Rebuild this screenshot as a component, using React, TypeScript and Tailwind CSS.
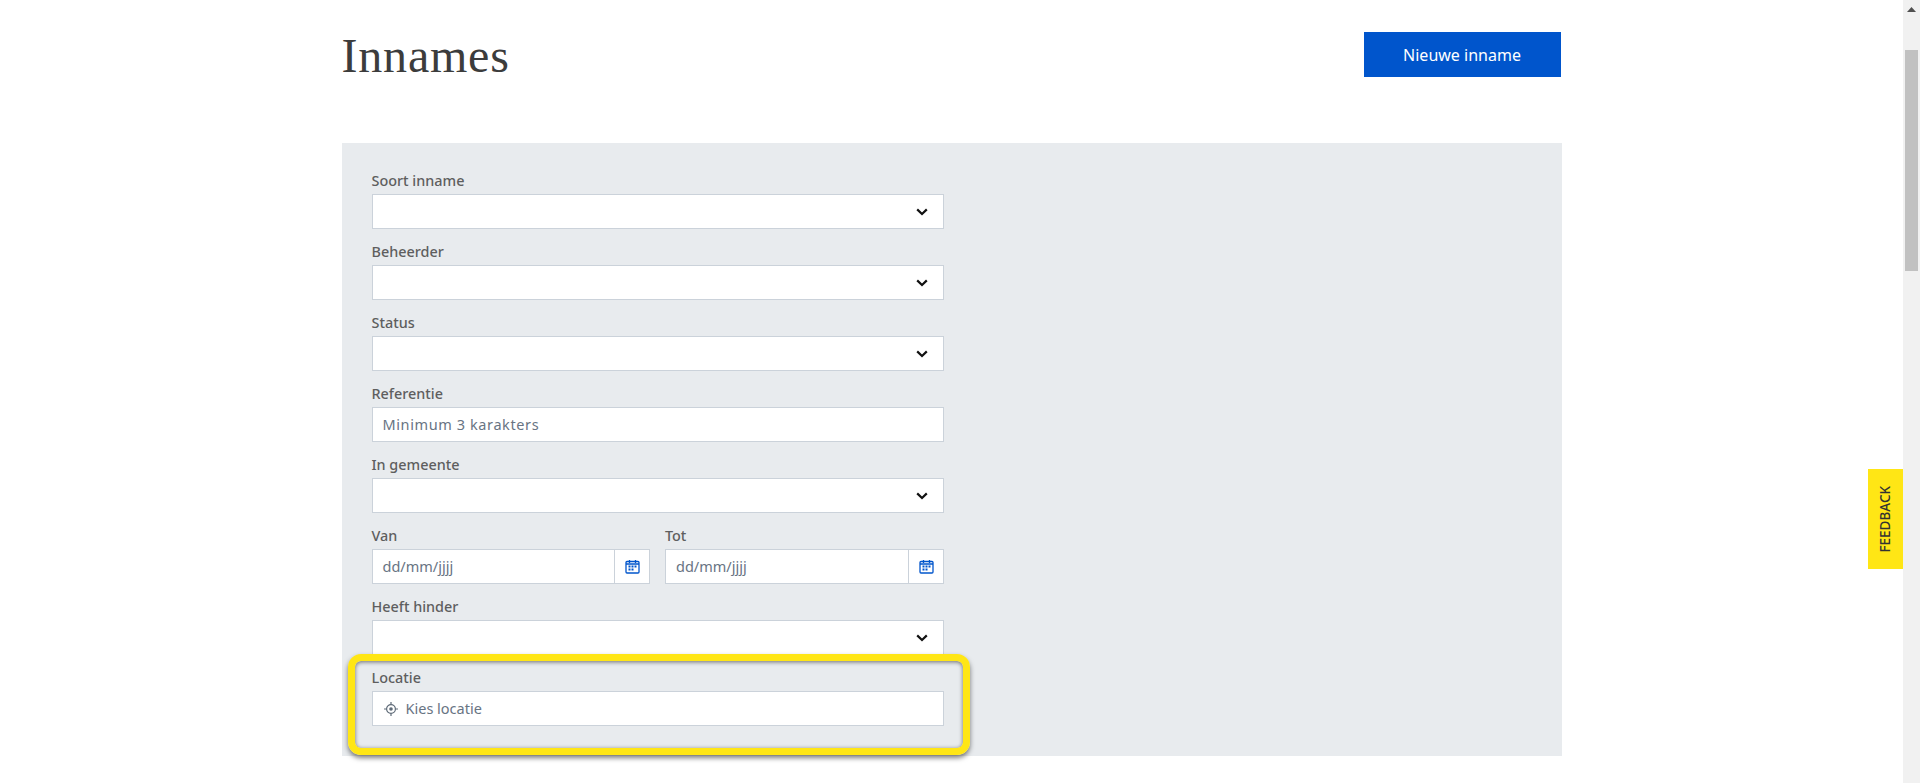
const sans = "font-['Noto_Sans',sans-serif]";

function Chevron() {
  return (
    <svg viewBox="0 0 12 8" className="h-[8px] w-[12px]" fill="none" stroke="#111" strokeWidth="2.2" aria-hidden="true">
      <path d="M1.2 1.4 6 6l4.8-4.6" />
    </svg>
  );
}

function CalendarIcon() {
  return (
    <svg viewBox="0 0 15 15" className="ml-px h-[15px] w-[15px]" fill="none" aria-hidden="true">
      <rect x="1" y="2.5" width="13" height="11.5" rx="1" stroke="#0055cc" strokeWidth="1.3" />
      <path d="M1 5h13M4.5 1v3M10.5 1v3" stroke="#0055cc" strokeWidth="1.3" />
      <path d="M3.5 6.5h2v2h-2zM6.5 6.5h2v2h-2zM9.5 6.5h2v2h-2zM3.5 9.5h2v2h-2zM6.5 9.5h2v2h-2z" fill="#0055cc" />
    </svg>
  );
}

function LocationIcon() {
  return (
    <svg viewBox="0 0 14 14" className="h-[14px] w-[14px]" fill="none" stroke="#5f6b78" aria-hidden="true">
      <circle cx="7" cy="7" r="4.4" strokeWidth="1.2" />
      <circle cx="7" cy="7" r="1.8" fill="#5f6b78" stroke="none" />
      <path d="M7 0v2.6M7 11.4V14M0 7h2.6M11.4 7H14" strokeWidth="1.2" />
    </svg>
  );
}

function Label({ children }: { children: string }) {
  return <label className="block h-[23px] text-[14.4px] leading-[19px] font-medium text-[#5e5e5e]">{children}</label>;
}

function SelectField({ label }: { label: string }) {
  return (
    <div className="mb-[13px]">
      <Label>{label}</Label>
      <div className="flex h-[35px] items-center justify-end border border-[#cbd2da] bg-white pr-[15px]">
        <Chevron />
      </div>
    </div>
  );
}

function TextField({ label, placeholder }: { label: string; placeholder: string }) {
  return (
    <div className="mb-[13px]">
      <Label>{label}</Label>
      <div className="flex h-[35px] items-center border border-[#cbd2da] bg-white px-[10px] text-[14.5px] tracking-[0.6px] text-[#687483]">
        {placeholder}
      </div>
    </div>
  );
}

function DateField({ label }: { label: string }) {
  return (
    <div className="flex-1">
      <Label>{label}</Label>
      <div className="flex h-[35px] border border-[#cbd2da] bg-white">
        <div className="flex flex-1 items-center px-[10px] text-[14.5px] text-[#687483]">dd/mm/jjjj</div>
        <div className="flex w-[35px] items-center justify-center border-l border-[#cbd2da]">
          <CalendarIcon />
        </div>
      </div>
    </div>
  );
}

export default function App() {
  return (
    <div className={`relative flex h-screen overflow-hidden bg-white ${sans}`}>
      <main className="flex-1 pt-[32px]">
        <div className="mx-auto w-[1220px]">
          <div className="flex h-[45px] items-start justify-between pr-px">
            <h1 className="-mt-[3px] font-['Liberation_Serif',serif] text-[48px] leading-[54px] font-normal tracking-[0.8px] text-[#3c3c3c]">
              Innames
            </h1>
            <button className="h-[45px] w-[197px] bg-[#0055cc] text-[16px] font-normal text-white">Nieuwe inname</button>
          </div>

          <section className="mt-[66px] h-[613px] bg-[#e8ebee] pt-[28px] pl-[30px]">
            <div className="w-[572px]">
              <SelectField label="Soort inname" />
              <SelectField label="Beheerder" />
              <SelectField label="Status" />
              <TextField label="Referentie" placeholder="Minimum 3 karakters" />
              <SelectField label="In gemeente" />
              <div className="mb-[13px] flex gap-[15px]">
                <DateField label="Van" />
                <DateField label="Tot" />
              </div>
              <SelectField label="Heeft hinder" />
              <div>
                <Label>Locatie</Label>
                <div className="flex h-[35px] items-center gap-[8px] border border-[#cbd2da] bg-white pl-[11px] text-[14.5px] text-[#687483]">
                  <LocationIcon />
                  Kies locatie
                </div>
              </div>
            </div>
          </section>
        </div>
      </main>

      <aside className="flex w-[17px] flex-col items-center bg-[#f1f1f1]">
        <svg viewBox="0 0 9 5" className="mt-[7px] h-[5px] w-[9px]" fill="#505050" aria-hidden="true">
          <path d="M4.5 0 9 5H0z" />
        </svg>
        <div className="mt-[38px] h-[221px] w-[13px] bg-[#c1c1c1]" />
      </aside>

      {/* highlight rond de locatie */}
      <div className="absolute top-[654px] left-[348px] h-[101px] w-[622px] rounded-[13px] border-[7px] border-[#ffe615] shadow-[0_3px_5px_rgba(0,0,0,0.5),inset_0_1px_4px_rgba(0,0,0,0.55)]" />

      <button className="absolute top-[469px] left-[1868px] flex h-[100px] w-[35px] items-center justify-center bg-[#ffe615] text-[13.5px] font-medium text-[#333332]">
        <span className="-ml-[1px] rotate-180 [writing-mode:vertical-rl]">FEEDBACK</span>
      </button>
    </div>
  );
}
